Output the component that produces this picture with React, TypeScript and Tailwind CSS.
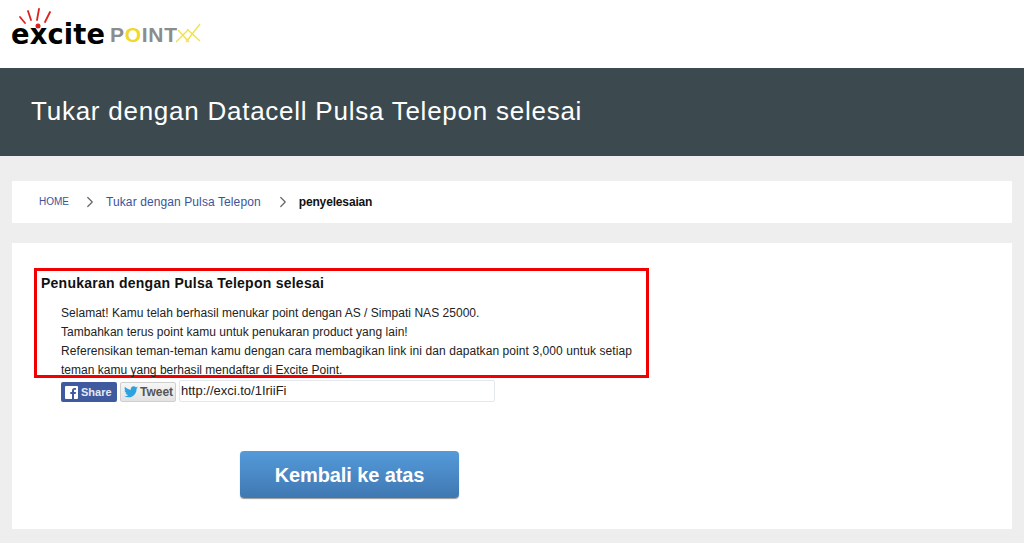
import { ChevronRight } from 'lucide-react'

const sans = { fontFamily: '"Liberation Sans", Arial, sans-serif' }

function Logo() {
  return (
    <div className="relative flex items-end h-[41px] w-[195px] select-none">
      <svg className="absolute left-0 -top-[2px]" width="50" height="24" viewBox="0 0 50 24">
        <path d="M9 9 L14 15" stroke="#e02020" strokeWidth="1.8" strokeLinecap="round" />
        <path d="M17 3 L20 12" stroke="#e02020" strokeWidth="1.8" strokeLinecap="round" />
        <path d="M28 1 L26 12" stroke="#e02020" strokeWidth="1.8" strokeLinecap="round" />
        <path d="M39 4 L34 14" stroke="#e02020" strokeWidth="1.8" strokeLinecap="round" />
        <circle cx="27" cy="18" r="2.5" fill="#e02020" />
      </svg>
      <span className="text-[29px] leading-[34px] font-bold text-black tracking-[0.2px] [font-family:'DejaVu_Sans',sans-serif] scale-x-[0.94] origin-left w-[98px] whitespace-nowrap">excite</span>
      <span className="text-[21px] leading-[32px] font-bold text-[#8c8c8c] tracking-[0.7px] ml-[1px] w-[66px]" style={sans}>
        P<span className="text-[#efd92c]">O</span>INT
      </span>
      <svg className="mb-[8px]" width="25" height="20" viewBox="0 0 25 20">
        <path d="M0 19 L12 7 M2 7 L13 19 M10 19 L24 1 M11 6 L24 18" stroke="#f2e04a" strokeWidth="1.3" fill="none" />
      </svg>
    </div>
  )
}

export default function App() {
  return (
    <div className="h-[543px] w-[1024px] overflow-hidden bg-[#eeeeee] text-black" style={sans}>
      {/* Header */}
      <div className="h-[68px] bg-white pl-[11px] pt-[10px]">
        <Logo />
      </div>
      <div className="h-[88px] bg-[#3c4a50] pl-[31px] flex items-center">
        <h1 className="text-[26px] font-normal text-white tracking-[0.75px] -mt-[1px]">Tukar dengan Datacell Pulsa Telepon selesai</h1>
      </div>

      {/* Breadcrumb */}
      <div className="mx-3 mt-[25px] h-[42px] bg-white flex items-center pl-[27px]">
        <a className="text-[10px] text-[#3a539b] w-[38px] -mt-[2px]">HOME</a>
        <ChevronRight className="w-[18px] h-[18px] text-[#666] ml-[4px]" strokeWidth={1.6} />
        <a className="text-[12px] text-[#3a539b] ml-[7px] tracking-[0.1px]">Tukar dengan Pulsa Telepon</a>
        <ChevronRight className="w-[18px] h-[18px] text-[#666] ml-[13px]" strokeWidth={1.6} />
        <span className="text-[12px] font-bold text-[#111] ml-[7px] tracking-[-0.15px]">penyelesaian</span>
      </div>

      {/* Content */}
      <div className="mx-3 mt-[20px] h-[286px] bg-white pt-[25px] pl-[22px]">
        <div className="w-[615px] h-[110px] border-[3px] border-[#f00000] pl-[4px] pt-[2px]">
          <h2 className="text-[14px] leading-[20px] font-bold text-[#111] tracking-[0.25px]">Penukaran dengan Pulsa Telepon selesai</h2>
          <div className="pl-[20px] pt-[11px] text-[12px] leading-[19px] text-[#222]">
            <p className="tracking-[0.03px]">Selamat! Kamu telah berhasil menukar point dengan AS / Simpati NAS 25000.</p>
            <p className="tracking-[0.03px]">Tambahkan terus point kamu untuk penukaran product yang lain!</p>
            <p className="tracking-[0.08px]">Referensikan teman-teman kamu dengan cara membagikan link ini dan dapatkan point 3,000 untuk setiap</p>
            <p className="tracking-[0.01px]">teman kamu yang berhasil mendaftar di Excite Point.</p>
          </div>
        </div>

        {/* Share row */}
        <div className="flex items-start pl-[27px] pt-[4px]">
          <button className="h-[20px] w-[56px] rounded-[2px] bg-[#3f5a9e] flex items-center pl-[4px] text-white text-[11px] font-bold">
            <svg width="13" height="13" viewBox="0 0 13 13" className="shrink-0">
              <rect width="13" height="13" rx="1" fill="#fff" />
              <path d="M9 13 V8 H10.7 L11 6 H9 V4.8 C9 4.2 9.2 3.8 10 3.8 H11 V2 C10.7 2 10.2 1.9 9.5 1.9 C8 1.9 7 2.8 7 4.5 V6 H5.3 V8 H7 V13 Z" fill="#3f5a9e" />
            </svg>
            <span className="ml-[3px] text-[#e4e9f4]">Share</span>
          </button>
          <button className="ml-[3px] h-[20px] w-[56px] rounded-[2px] border border-[#cfcfcf] bg-gradient-to-b from-[#f6f6f6] to-[#e2e2e2] flex items-center pl-[3px] text-[#555] text-[12px] font-bold">
            <svg width="14" height="12" viewBox="0 0 24 20" className="shrink-0">
              <path d="M24 2.4c-.9.4-1.8.7-2.8.8 1-.6 1.8-1.6 2.2-2.7-1 .6-2 1-3.1 1.2C19.300.700 18 0 16.600 0c-2.700 0-4.900 2.200-4.900 4.900 0 .400 0 .800.100 1.100C7.700 5.800 4.100 3.900 1.700.900c-.400.700-.700 1.600-.700 2.500 0 1.700.900 3.200 2.200 4.100-.800 0-1.600-.200-2.200-.600v.100c0 2.400 1.700 4.400 3.900 4.800-.400.100-.800.200-1.300.200-.300 0-.600 0-.900-.100.600 2 2.400 3.400 4.600 3.400-1.700 1.300-3.800 2.100-6.100 2.100-.400 0-.800 0-1.200-.100C2.200 18.300 4.800 19.100 7.500 19.100c9.100 0 14-7.500 14-14v-.600c1-.700 1.800-1.600 2.500-2.100z" fill="#2aa3e0" />
            </svg>
            <span className="ml-[2px]">Tweet</span>
          </button>
          <div className="ml-[3px] -mt-[2px] h-[22px] w-[316px] border border-[#e4e8ee] rounded-[2px] pl-[1px] pt-[1px] text-[13px] leading-[18px] text-[#222]">http://exci.to/1IriiFi</div>
        </div>

        {/* Back to top */}
        <button className="block ml-[206px] mt-[49px] h-[47px] w-[219px] rounded-[4px] bg-gradient-to-b from-[#559ada] to-[#3f78b2] shadow-[0_1px_1px_rgba(0,0,0,0.4)] text-white text-[20px] font-bold tracking-[-0.1px]">
          Kembali ke atas
        </button>
      </div>
    </div>
  )
}
